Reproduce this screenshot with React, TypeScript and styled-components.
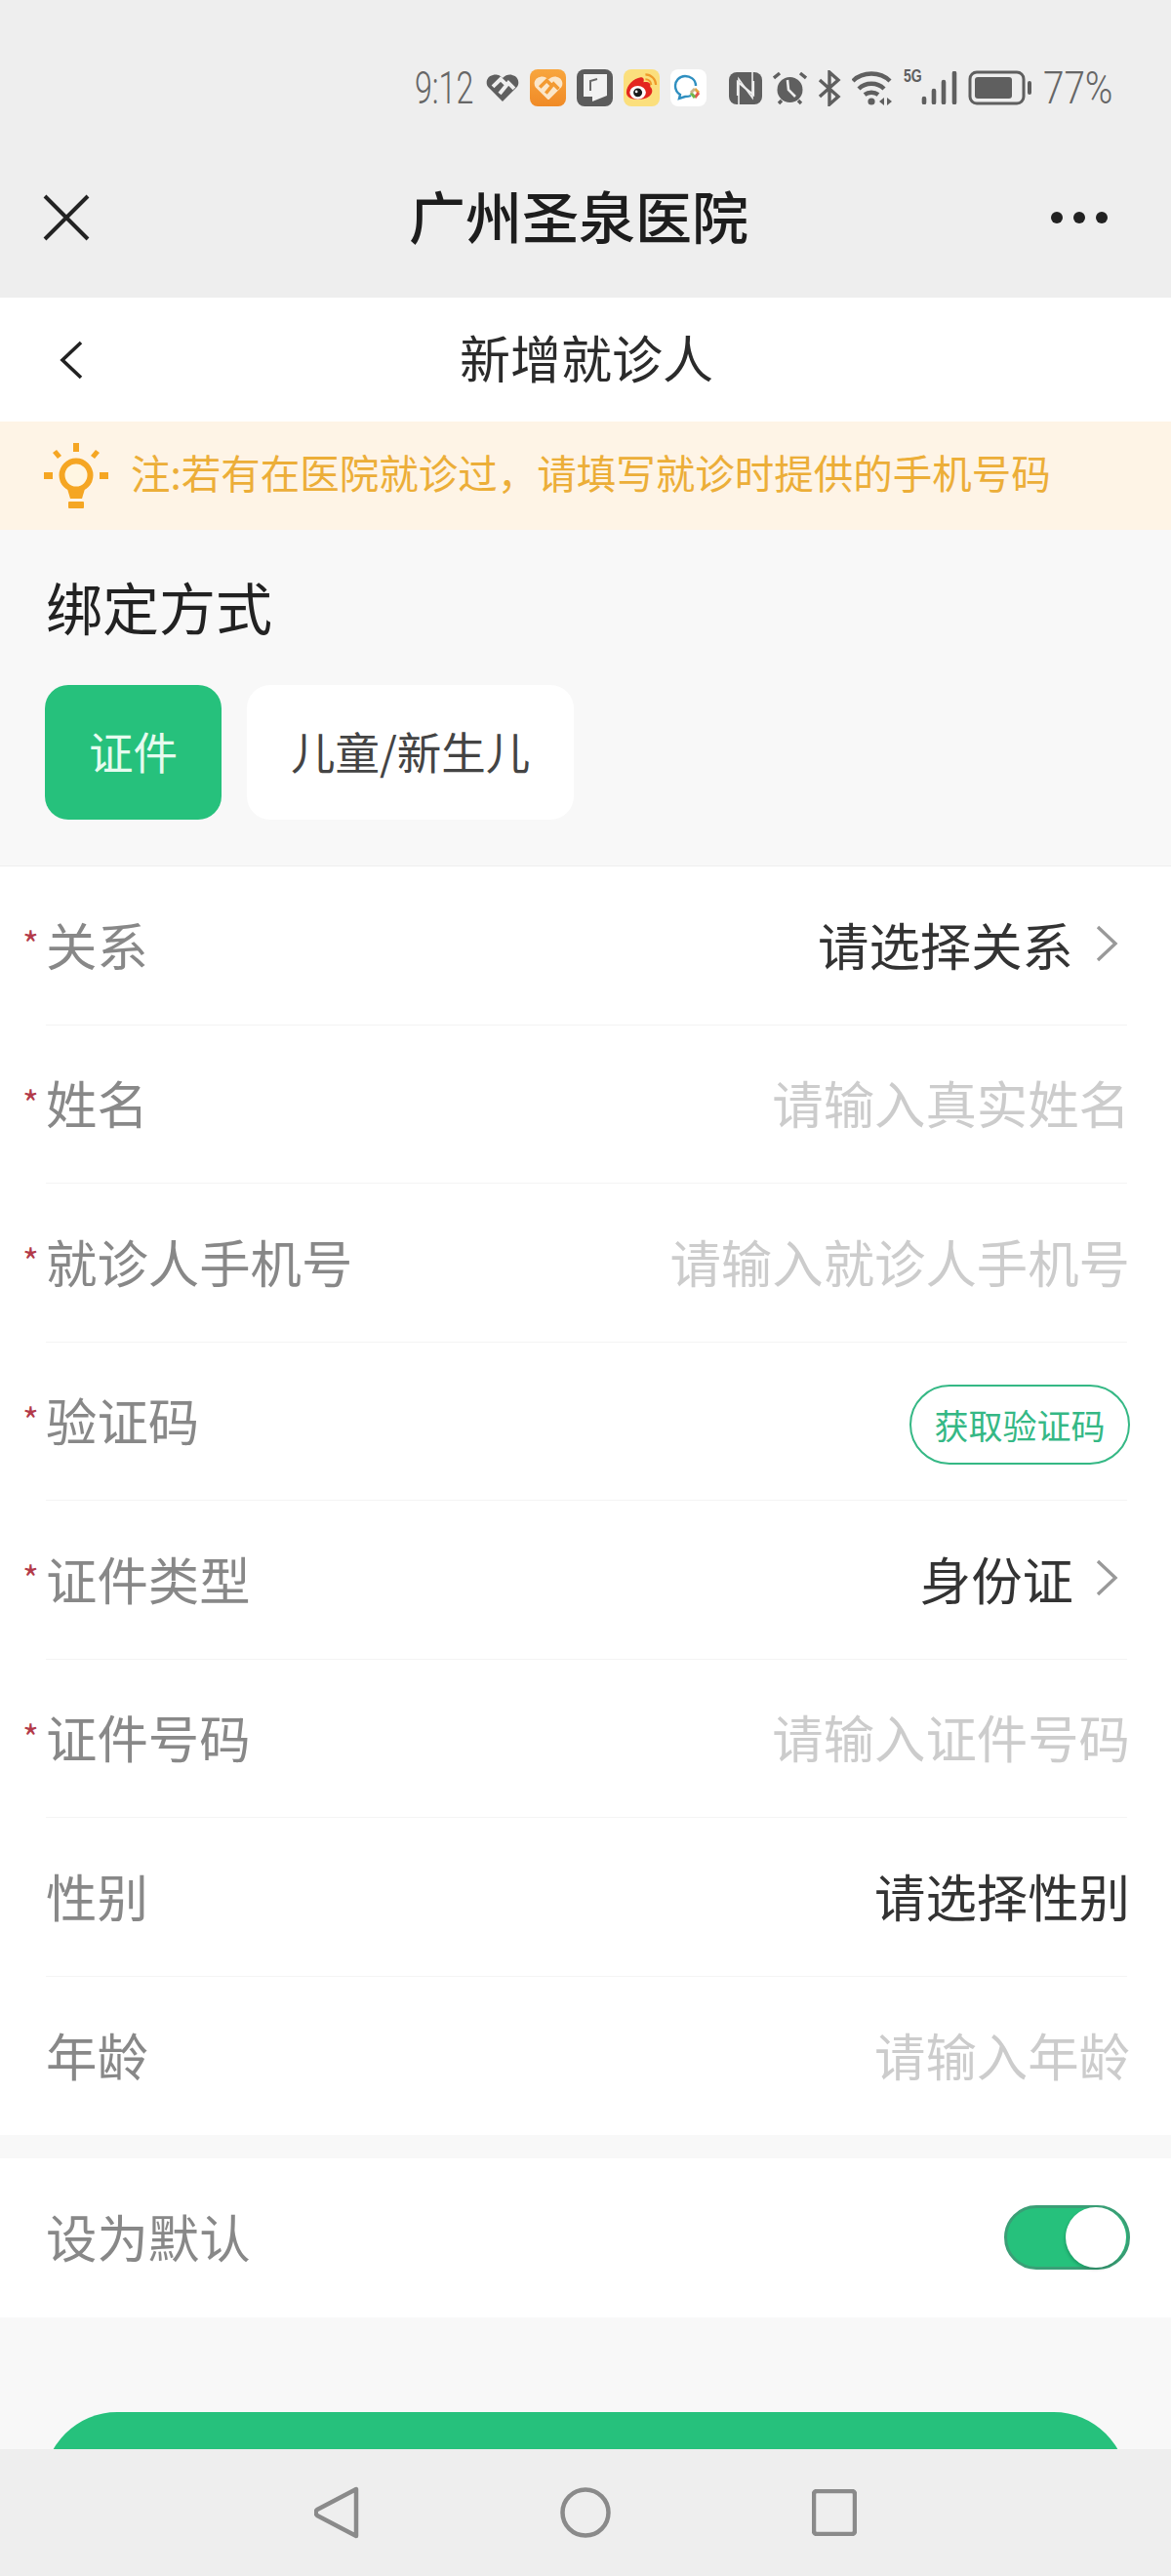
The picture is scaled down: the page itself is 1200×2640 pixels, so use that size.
import styled, { createGlobalStyle } from 'styled-components';

const GlobalStyle = createGlobalStyle`
  html, body {
    margin: 0;
    padding: 0;
    background: #ffffff;
  }
  * {
    box-sizing: border-box;
  }
`;

const GREEN = '#26c17c';
const ICON = '#5f5f5f';

const NOTICE = '注:若有在医院就诊过\uFF0C请填写就诊时提供的手机号码';

const rows = [
  { label: '关系', required: true, value: '请选择关系', arrow: true },
  { label: '姓名', required: true, placeholder: '请输入真实姓名' },
  { label: '就诊人手机号', required: true, placeholder: '请输入就诊人手机号' },
  { label: '验证码', required: true, code: true },
  { label: '证件类型', required: true, value: '身份证', arrow: true },
  { label: '证件号码', required: true, placeholder: '请输入证件号码' },
  { label: '性别', value: '请选择性别' },
  { label: '年龄', placeholder: '请输入年龄' },
];

const HeartMark = ({ color, stripe, size }: { color: string; stripe: string; size: number }) => (
  <svg width={size} height={size * 0.82} viewBox="0 0 34 28">
    <path d="M17 28 L2 13 C-1 9 1 2 7 1 C11 0 14 1 17 4 C20 1 24 0 27 1 C33 2 35 9 32 13 Z" fill={color} />
    <path d="M7 13 L15 5 L21 11 M14 20 L23 9 L29 15" stroke={stripe} strokeWidth="4" fill="none" />
  </svg>
);

const StatusIcons = () => (
  <>
    <HeartMark color={ICON} stripe="#eeeeee" size={34} />
    <AppTile $bg="linear-gradient(#f8a63e, #f08a26)">
      <HeartMark color="#fbe6c8" stripe="#f39a30" size={30} />
    </AppTile>
    <AppTile $bg="#5c5c5c">
      <svg width="30" height="32" viewBox="0 0 30 32">
        <path d="M3 2 H27 V24 L12 30 V25 H3 Z" fill="#f2f2f2" />
        <path d="M10 19 V9 L17 7" stroke="#6a6a6a" strokeWidth="2" fill="none" />
      </svg>
    </AppTile>
    <AppTile $bg="#fbdf7d">
      <svg width="37" height="38" viewBox="0 0 38 38">
        <path d="M3 24 C3 16 11 9 18 8 C21 8 22 10 21 13 C26 12 29 14 28 18 C31 20 31 25 27 28 C20 33 3 33 3 24 Z" fill="#e3261f" />
        <ellipse cx="15" cy="24" rx="8.5" ry="7" fill="#ffffff" />
        <circle cx="15" cy="24" r="4.6" fill="#1a1a1a" />
        <circle cx="13.5" cy="23" r="1.4" fill="#ffffff" />
        <path d="M23 5 C29 5 34 10 34 16 M23 10 C26 10 29 12 29 16" stroke="#ef9a2a" strokeWidth="2.2" fill="none" />
      </svg>
    </AppTile>
    <AppTile $bg="#ffffff">
      <svg width="36" height="36" viewBox="0 0 36 36">
        <path d="M25 16 C25 9 19 6 14 6 C8 6 4 11 4 16 C4 20 6 23 9 25 L8 29 L14 27 C16 27 18 27 20 26" stroke="#2f8fc0" strokeWidth="2.4" fill="none" />
        <path d="M24 19 L28 23" stroke="#e9a23b" strokeWidth="3" />
        <path d="M28 23 L24 28" stroke="#e2574c" strokeWidth="3" />
        <path d="M24 28 L20 23" stroke="#6fb84a" strokeWidth="3" />
        <path d="M20 23 L24 19" stroke="#c9b48a" strokeWidth="3" />
      </svg>
    </AppTile>
    <IconGap />
    <svg width="34" height="33" viewBox="0 0 34 33">
      <rect width="34" height="33" rx="8" fill={ICON} />
      <path d="M10 33 V7 L24 26 V0" stroke="#eeeeee" strokeWidth="1.6" fill="none" />
      <path d="M9 24 V10 L25 23 V9" stroke="#eeeeee" strokeWidth="2.2" fill="none" />
    </svg>
    <svg width="35" height="36" viewBox="0 0 35 36">
      <circle cx="17.5" cy="20" r="13" fill={ICON} />
      <path d="M15 10 L16 20 L23 27" stroke="#eeeeee" strokeWidth="2.6" fill="none" />
      <path d="M1 8 L7 3 M34 8 L28 3 M6 34 L9 31 M29 34 L26 31" stroke={ICON} strokeWidth="3.4" />
    </svg>
    <svg width="24" height="37" viewBox="0 0 24 37">
      <path d="M2 10 L21 27 L12 35 V2 L21 10 L2 27" stroke={ICON} strokeWidth="3.4" fill="none" />
    </svg>
    <svg width="42" height="36" viewBox="0 0 42 36">
      <path d="M1 11 C11 1 29 1 39 11 M7 19 C14 12 26 12 33 19 M13 25 C17 22 23 22 27 25" stroke={ICON} strokeWidth="4.4" fill="none" />
      <circle cx="20" cy="32" r="3.6" fill={ICON} />
      <path d="M33 28 L28 32 L33 36 Z M36 28 L41 32 L36 36 Z" fill={ICON} />
    </svg>
    <SignalBlock>
      <FiveG>5G</FiveG>
      <svg width="37" height="34" viewBox="0 0 37 34">
        <path d="M3 32 V28 M13 32 V20 M23 32 V11 M34 32 V2" stroke={ICON} strokeWidth="4.6" strokeLinecap="round" />
      </svg>
    </SignalBlock>
    <svg width="66" height="36" viewBox="0 0 66 36">
      <rect x="2" y="2" width="55" height="32" rx="7" fill="none" stroke={ICON} strokeWidth="3" />
      <rect x="7" y="7" width="38" height="22" rx="3" fill={ICON} />
      <rect x="61" y="11" width="4" height="14" rx="2" fill={ICON} />
    </svg>
    <Percent>77%</Percent>
  </>
);

const FormRow = ({ row }: { row: (typeof rows)[number] }) => (
  <Row>
    {row.required && <Star>*</Star>}
    <Label>{row.label}</Label>
    {row.value && <Value>{row.value}</Value>}
    {row.placeholder && <Placeholder>{row.placeholder}</Placeholder>}
    {row.code && <CodeButton type="button">获取验证码</CodeButton>}
    {row.arrow && (
      <RowArrow width="26" height="40" viewBox="0 0 26 40">
        <path d="M4 3 L22 20 L4 37" stroke="#999999" strokeWidth="3.4" fill="none" />
      </RowArrow>
    )}
  </Row>
);

const App = () => (
  <Page>
    <GlobalStyle />
    <TopBar>
      <StatusBar>
        <Time>9:12</Time>
        <StatusIcons />
      </StatusBar>
      <NavBar>
        <svg width="50" height="50" viewBox="0 0 50 50">
          <path d="M3 3 L47 47 M47 3 L3 47" stroke="#222222" strokeWidth="4" />
        </svg>
        <NavTitle>广州圣泉医院</NavTitle>
        <Dots>
          <i />
          <i />
          <i />
        </Dots>
      </NavBar>
    </TopBar>
    <Content>
      <SubHeader>
        <BackIcon width="26" height="42" viewBox="0 0 26 42">
          <path d="M23 3 L4 21 L23 39" stroke="#222222" strokeWidth="3.6" fill="none" />
        </BackIcon>
        <SubTitle>新增就诊人</SubTitle>
      </SubHeader>
      <Notice>
        <svg width="66" height="68" viewBox="0 0 66 68">
          <g fill="#f5a623">
            <rect x="30" y="0" width="6" height="9" />
            <rect x="0" y="30" width="9" height="7" />
            <rect x="57" y="30" width="9" height="7" />
            <path d="M9 10 L13 7 L18 13 L14 16 Z M57 10 L53 7 L48 13 L52 16 Z" />
            <path d="M24 47 H42 L39 57 H27 Z" />
            <rect x="25" y="60" width="16" height="7" rx="1" />
          </g>
          <circle cx="33" cy="33" r="14.5" fill="#fff6e2" stroke="#f5a623" strokeWidth="6" />
        </svg>
        <NoticeText>{NOTICE}</NoticeText>
      </Notice>
      <BindSection>
        <BindTitle>绑定方式</BindTitle>
        <BindTabs>
          <BindTab $active>证件</BindTab>
          <BindTab>儿童/新生儿</BindTab>
        </BindTabs>
      </BindSection>
      <FormCard>
        {rows.map((row) => (
          <FormRow key={row.label} row={row} />
        ))}
      </FormCard>
      <DefaultCard>
        <Row>
          <Label>设为默认</Label>
          <Toggle>
            <ToggleKnob />
          </Toggle>
        </Row>
      </DefaultCard>
      <SubmitButton type="button" />
    </Content>
    <SystemBar>
      <svg width="46" height="54" viewBox="0 0 46 54">
        <path d="M43 3 V51 L3 30 Q0 27 3 24 Z" fill="none" stroke="#8a8a8a" strokeWidth="4.5" strokeLinejoin="round" />
      </svg>
      <svg width="52" height="52" viewBox="0 0 52 52">
        <circle cx="26" cy="26" r="23.5" fill="none" stroke="#8a8a8a" strokeWidth="4.5" />
      </svg>
      <svg width="46" height="48" viewBox="0 0 46 48">
        <rect x="2" y="2" width="42" height="44" rx="3" fill="none" stroke="#8a8a8a" strokeWidth="4.5" />
      </svg>
    </SystemBar>
  </Page>
);

export default App;

const Page = styled.div`
  display: flex;
  flex-direction: column;
  width: 1200px;
  height: 2640px;
  overflow: hidden;
  background: #f8f8f8;
  font-family: 'Noto Sans CJK SC', 'Noto Sans', sans-serif;
`;

const TopBar = styled.header`
  flex: none;
  height: 305px;
  background: #eeeeee;
`;

const StatusBar = styled.div`
  display: flex;
  align-items: center;
  justify-content: flex-end;
  gap: 11px;
  height: 132px;
  padding: 48px 60px 0 0;
`;

const Time = styled.span`
  width: 60px;
  margin-right: 2px;
  color: #666666;
  font-family: Roboto, 'Noto Sans', sans-serif;
  font-size: 46px;
  font-weight: 300;
  line-height: 1;
  white-space: nowrap;
  transform: scaleX(0.7);
  transform-origin: left center;
`;

const AppTile = styled.span<{ $bg: string }>`
  display: flex;
  align-items: center;
  justify-content: center;
  width: 37px;
  height: 38px;
  border-radius: 8px;
  background: ${({ $bg }) => $bg};
  overflow: hidden;
`;

const IconGap = styled.span`
  width: 1px;
`;

const SignalBlock = styled.span`
  position: relative;
  display: flex;
  padding-left: 18px;
`;

const FiveG = styled.b`
  position: absolute;
  top: -4px;
  left: 0;
  color: ${ICON};
  font-family: 'Liberation Sans', sans-serif;
  font-size: 18px;
  line-height: 1;
  transform: scaleX(0.78);
  transform-origin: left center;
`;

const Percent = styled.span`
  width: 71px;
  color: #666666;
  font-family: Roboto, 'Noto Sans', sans-serif;
  font-size: 46px;
  font-weight: 300;
  line-height: 1;
  white-space: nowrap;
  transform: scaleX(0.84);
  transform-origin: left center;
`;

const NavBar = styled.div`
  display: flex;
  align-items: center;
  justify-content: space-between;
  height: 173px;
  padding: 8px 65px 0 43px;
`;

const NavTitle = styled.h1`
  margin: 0 0 6px 16px;
  color: #1d1d1d;
  font-size: 58px;
  font-weight: 500;
  line-height: 1;
`;

const Dots = styled.div`
  display: flex;
  gap: 11px;

  & > i {
    width: 12px;
    height: 12px;
    border-radius: 50%;
    background: #222222;
  }
`;

const Content = styled.main`
  flex: 1;
  min-height: 0;
  overflow: hidden;
`;

const SubHeader = styled.div`
  position: relative;
  display: flex;
  align-items: center;
  justify-content: center;
  height: 127px;
  background: #ffffff;
`;

const BackIcon = styled.svg`
  position: absolute;
  top: 43px;
  left: 60px;
`;

const SubTitle = styled.h2`
  margin: 0 0 6px 2px;
  color: #2b2b2b;
  font-size: 52px;
  font-weight: 400;
  line-height: 1;
`;

const Notice = styled.div`
  display: flex;
  align-items: center;
  gap: 23px;
  height: 111px;
  padding-left: 45px;
  background: #fef4e6;
`;

const NoticeText = styled.span`
  margin-bottom: 6px;
  color: #ecae38;
  font-size: 40.5px;
  line-height: 1;
  white-space: nowrap;
`;

const BindSection = styled.section`
  height: 345px;
  padding: 47px 46px 0;
  border-bottom: 1px solid #efefef;
  background: #f8f8f8;
`;

const BindTitle = styled.h3`
  margin: 0 0 50px 1px;
  color: #222222;
  font-size: 58px;
  font-weight: 400;
  line-height: 62px;
`;

const BindTabs = styled.div`
  display: flex;
  gap: 26px;
`;

const BindTab = styled.div<{ $active?: boolean }>`
  display: flex;
  align-items: center;
  justify-content: center;
  height: 138px;
  padding: 0 45px 5px;
  border-radius: 24px;
  background: ${({ $active }) => ($active ? GREEN : '#ffffff')};
  color: ${({ $active }) => ($active ? '#e6fbef' : '#444444')};
  font-size: 45.5px;
`;

const FormCard = styled.section`
  margin-bottom: 24px;
  padding-left: 47px;
  background: #ffffff;
`;

const DefaultCard = styled.section`
  padding-left: 47px;
  background: #ffffff;
`;

const Row = styled.div`
  position: relative;
  display: flex;
  align-items: center;
  height: 162.5px;
  margin-right: 45px;
  padding-bottom: 4px;
  border-bottom: 1px solid #f4f4f4;

  ${FormCard} &:last-child,
  ${DefaultCard} & {
    border-bottom: none;
  }
`;

const Star = styled.span`
  position: absolute;
  top: 60px;
  left: -24px;
  color: #b33a4a;
  font-size: 36px;
  line-height: 1;
`;

const Label = styled.span`
  flex: 1;
  color: #888888;
  font-size: 52.4px;
  line-height: 1;
`;

const Value = styled.span`
  margin-right: -3px;
  color: #333333;
  font-size: 52.4px;
  line-height: 1;
`;

const Placeholder = styled.span`
  margin-right: -3px;
  color: #cccccc;
  font-size: 52.4px;
  line-height: 1;
`;

const RowArrow = styled.svg`
  margin: 0 8px 0 24px;
`;

const CodeButton = styled.button`
  width: 226px;
  height: 82px;
  margin: 11px -3px 0 0;
  padding: 0;
  border: 2px solid #35b885;
  border-radius: 41px;
  background: #ffffff;
  color: #35b885;
  font-family: inherit;
  font-size: 35px;
`;

const Toggle = styled.div`
  position: relative;
  width: 129px;
  height: 66px;
  margin: 4px -3px 0 0;
  border: 3px solid #3a9f76;
  border-radius: 33px;
  background: ${GREEN};
`;

const ToggleKnob = styled.span`
  position: absolute;
  top: -1px;
  right: 1px;
  width: 62px;
  height: 62px;
  border-radius: 50%;
  background: #ffffff;
  box-shadow: -1px 2px 3px rgba(0, 60, 40, 0.25);
`;

const SubmitButton = styled.button`
  display: block;
  width: 1110px;
  height: 150px;
  margin: 97px 45px 0;
  border: none;
  border-radius: 75px;
  background: ${GREEN};
`;

const SystemBar = styled.footer`
  flex: none;
  display: flex;
  align-items: center;
  justify-content: center;
  gap: 206px;
  height: 130px;
  background: #eeeeee;
`;
